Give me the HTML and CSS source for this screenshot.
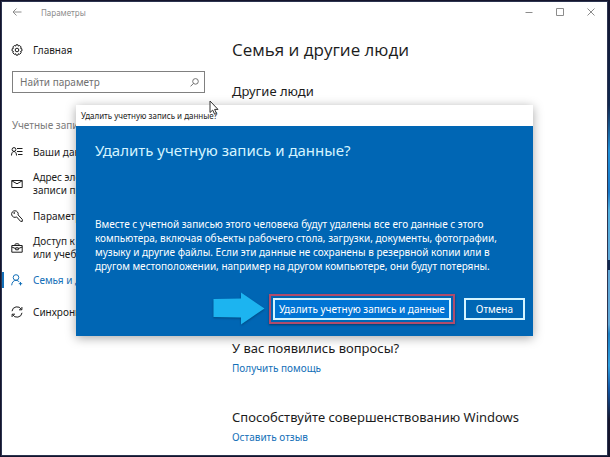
FILE: index.html
```html
<!DOCTYPE html>
<html lang="ru">

<head>
    <meta charset="UTF-8">
    <meta name="viewport" content="width=device-width, initial-scale=1.0">
    <title>Параметры</title>
    <link rel="stylesheet" href="styles.css">
</head>

<body>
    <div class="window">
        <header class="titlebar">
            <button class="title-button" aria-label="Назад">
                <svg width="10" height="10" viewBox="0 0 10 10"><path d="M9.5 5H1M4.5 1.5L1 5l3.5 3.5"/></svg>
            </button>
            <span class="app-name">Параметры</span>
            <div class="window-controls">
                <button class="title-button" aria-label="Свернуть">
                    <svg width="8" height="8" viewBox="0 0 8 8"><path d="M0.5 4.5h7"/></svg>
                </button>
                <button class="title-button" aria-label="Развернуть">
                    <svg width="8" height="8" viewBox="0 0 8 8"><path d="M0.5 0.5h7v7h-7z"/></svg>
                </button>
                <button class="title-button" aria-label="Закрыть">
                    <svg width="8" height="8" viewBox="0 0 8 8"><path d="M0.5 0.5l7 7M7.5 0.5l-7 7"/></svg>
                </button>
            </div>
        </header>

        <div class="content">
            <aside class="sidebar">
                <a href="#" class="home">
                    <svg width="12" height="12" viewBox="0 0 12 12">
                        <path d="M5 0.8h2l0.4 1.3 1.3-0.6 1.5 1.5-0.7 1.3 1.4 0.5v2.2l-1.4 0.5 0.7 1.3-1.5 1.5-1.3-0.6-0.4 1.4H5l-0.4-1.4-1.3 0.6-1.5-1.5 0.7-1.3L1.1 7V4.8l1.4-0.5-0.7-1.3 1.5-1.5 1.3 0.6z"/>
                        <circle cx="6" cy="6" r="1.8"/>
                    </svg>
                    Главная
                </a>
                <div class="search">
                    <input type="text" placeholder="Найти параметр" aria-label="Найти параметр">
                    <svg class="search-icon" width="9" height="9" viewBox="0 0 9 9"><circle cx="5.5" cy="3.4" r="2.8"/><path d="M3.5 5.4L0.5 8.4"/></svg>
                </div>
                <h3 class="section-name">Учетные записи</h3>
                <nav class="menu">
                    <a href="#">
                        <svg width="12" height="12" viewBox="0 0 12 12"><circle cx="3" cy="3.5" r="1.9"/><path d="M0.5 9.5C0.5 7.2 1.5 5.5 3 5.5s2.5 1.7 2.5 4M6 2.5h5.5M6 5.5h5.5M7 8.5h4.5"/></svg>
                        <span>Ваши данные</span>
                    </a>
                    <a href="#">
                        <svg width="12" height="12" viewBox="0 0 12 12"><path d="M0.8 2.5h10.4v7H0.8zM0.8 2.8L6 5.8l5.2-3"/></svg>
                        <span>Адрес электронной почты; учетные<br>записи приложений</span>
                    </a>
                    <a href="#">
                        <svg width="12" height="12" viewBox="0 0 12 12"><path d="M5.6 6.9A3.3 3.3 0 1 1 7.1 4.9L11.3 9.4v2H9.6z"/><circle cx="3.2" cy="3" r="0.5"/></svg>
                        <span>Параметры входа</span>
                    </a>
                    <a href="#">
                        <svg width="12" height="12" viewBox="0 0 12 12"><path d="M0.8 3.5h10.4v6.7H0.8zM3.5 3.5L4.5 1.8h3l1 1.7M0.8 5l3.9 1.6M11.2 5L7.3 6.6M4.7 5.8h2.6v2H4.7z"/></svg>
                        <span>Доступ к учетной записи места<br>или учебного заведения</span>
                    </a>
                    <a href="#" class="active">
                        <svg width="12" height="12" viewBox="0 0 12 12"><circle cx="5" cy="3.5" r="2.8"/><path d="M0.7 11.3C0.9 8.3 2.6 6.3 5 6.3c1.4 0 2.6 0.8 3.4 1.9M9.5 8v3.4M7.8 9.7h3.4"/></svg>
                        <span>Семья и другие люди</span>
                    </a>
                    <a href="#">
                        <svg width="12" height="12" viewBox="0 0 12 12"><path d="M1 5.2A5 5 0 0 1 10.4 3.5M10.9 1v2.8H8M11 6.8A5 5 0 0 1 1.6 8.5M1.1 11V8.2H4"/></svg>
                        <span>Синхронизация параметров</span>
                    </a>
                </nav>
            </aside>

            <main class="page">
                <h1>Семья и другие люди</h1>
                <h2>Другие люди</h2>
                <section class="help">
                    <h2>У вас появились вопросы?</h2>
                    <a href="#">Получить помощь</a>
                </section>
                <section class="feedback">
                    <h2>Способствуйте совершенствованию Windows</h2>
                    <a href="#">Оставить отзыв</a>
                </section>
            </main>
        </div>
    </div>

    <div class="dialog" role="dialog" aria-labelledby="dialog-title">
        <div class="dialog-caption">Удалить учетную запись и данные?</div>
        <div class="dialog-body">
            <h2 id="dialog-title">Удалить учетную запись и данные?</h2>
            <p>Вместе с учетной записью этого человека будут удалены все его данные с этого компьютера, включая объекты рабочего стола, загрузки, документы, фотографии, музыку и другие файлы. Если эти данные не сохранены в резервной копии или в другом местоположении, например на другом компьютере, они будут потеряны.</p>
            <div class="dialog-buttons">
                <svg class="arrow" width="52" height="34" viewBox="0 0 52 34"><path d="M0.5 7L28 6.5V0.5L51.5 16.5 28 32.5V25.5L0.5 25z"/></svg>
                <div class="highlight">
                    <button class="primary">Удалить учетную запись и данные</button>
                </div>
                <button class="cancel">Отмена</button>
            </div>
        </div>
    </div>

    <svg class="cursor" width="11" height="16" viewBox="0 0 11 16"><path d="M1 1v11.5l2.7-2.4 2 4.2 1.8-0.9-1.9-4H9z"/></svg>
</body>

</html>
```

FILE: styles.css
```css
* {
    box-sizing: border-box;
}

body {
    margin: 0;
    min-height: 100vh;
    display: flex;
    padding: 1px 2px 1px 1px;
    font-family: "Noto Sans", "Open Sans", sans-serif;
    font-size: 10px;
    color: #1c1c1c;
    background-color: #14142c;
    background-image: linear-gradient(#14142c 0%, #102850 23%, #2090d8 33%, #1878c8 42%, #50b0e0 46%, #60a8d8 57%, #102850 57%, #102850 59%, #60a8d8 59%, #60a8d8 71%, #1c80c4 73%, #30a0e0 80%, #1058a8 85%, #14142c 92%);
    background-position: right top;
    background-size: 3px 100%;
    background-repeat: no-repeat;
    position: relative;
}

h1,
h2,
h3,
p {
    margin: 0;
    font-weight: 400;
}

a {
    text-decoration: none;
}

button {
    font-family: inherit;
    font-size: 10px;
    cursor: pointer;
}

svg {
    fill: none;
    stroke: currentColor;
    flex: none;
}

.window {
    flex: 1;
    background: #ffffff;
    border: 1px solid #2c3450;
}

.titlebar {
    display: flex;
    align-items: center;
    height: 20px;
    padding: 0 8px 0 7px;
    color: #8c8c8c;
}

.title-button {
    display: flex;
    align-items: center;
    justify-content: center;
    width: 16px;
    height: 20px;
    padding: 0;
    border: none;
    background: none;
    color: #8c8c8c;
}

.app-name {
    margin-left: 16px;
    font-size: 8px;
}

.window-controls {
    display: flex;
    gap: 15px;
    margin-left: auto;
}

.content {
    display: flex;
}

.sidebar {
    width: 230px;
    padding-top: 19px;
}

.home {
    display: flex;
    align-items: center;
    gap: 10px;
    height: 18px;
    padding-left: 9px;
    color: #1c1c1c;
}

.search {
    display: flex;
    align-items: center;
    height: 22px;
    margin: 12px 27px 0 10px;
    padding: 0 5px 0 7px;
    border: 1px solid #808080;
    color: #707070;
}

.search input {
    flex: 1;
    min-width: 0;
    padding: 0;
    border: none;
    outline: none;
    background: none;
    font-family: inherit;
    font-size: 10px;
}

.search input::placeholder {
    color: #707070;
    opacity: 1;
}

.section-name {
    margin: 24px 0 3px 10px;
    font-size: 10px;
    line-height: 16px;
    color: #7c7c7c;
}

.menu a {
    display: flex;
    align-items: center;
    gap: 10px;
    height: 32px;
    padding-left: 9px;
    line-height: 13px;
    color: #1c1c1c;
    white-space: nowrap;
    position: relative;
}

.menu .active {
    color: #1470b8;
}

.menu .active::before {
    content: "";
    position: absolute;
    left: 0;
    top: 8px;
    width: 2px;
    height: 16px;
    background: #1470b8;
}

.page {
    flex: 1;
    min-width: 0;
    padding-top: 15px;
}

.page h1 {
    font-family: "Open Sans", "Noto Sans", sans-serif;
    font-size: 17px;
    line-height: 26px;
}

.page h2 {
    font-size: 13px;
    line-height: 20px;
}

.page h1 + h2 {
    margin-top: 18px;
}

.page a {
    display: block;
    line-height: 20px;
    color: #1470b8;
}

.help {
    margin-top: 237px;
}

.feedback {
    margin-top: 29px;
}

.dialog {
    position: absolute;
    top: 105px;
    left: 76px;
    right: 77px;
    background: #ffffff;
    box-shadow: 0 2px 10px rgba(0, 0, 0, 0.35);
}

.dialog-caption {
    padding-left: 5px;
    font-size: 8px;
    line-height: 21px;
}

.dialog-body {
    padding: 10px 8px 10px 19px;
    background: #0066b4;
    color: #ffffff;
}

.dialog-body h2 {
    font-size: 15px;
    line-height: 28px;
    color: #d4f4ff;
}

.dialog-body p {
    margin: 53px 25px 0 0;
    line-height: 14px;
}

.dialog-buttons {
    display: flex;
    align-items: center;
    justify-content: flex-end;
    margin-top: 19px;
}

.arrow {
    margin-right: 4px;
    fill: #1cb4f0;
    stroke: none;
    filter: drop-shadow(0 1px 1px #004880);
}

.highlight {
    margin-right: 9px;
    padding: 2px;
    border: 2px solid #b04c6c;
    box-shadow: 0 1px 2px #003c70;
}

.primary,
.cancel {
    display: block;
    height: 22px;
    padding: 0 4px;
    border: 2px solid #d4f4ff;
    background: #0074d4;
    color: #ffffff;
    line-height: 16px;
}

.cancel {
    padding: 0 10px;
    background: #0066b4;
}

.cursor {
    position: absolute;
    top: 100px;
    left: 209px;
    fill: #ffffff;
    stroke: #303030;
}
```
